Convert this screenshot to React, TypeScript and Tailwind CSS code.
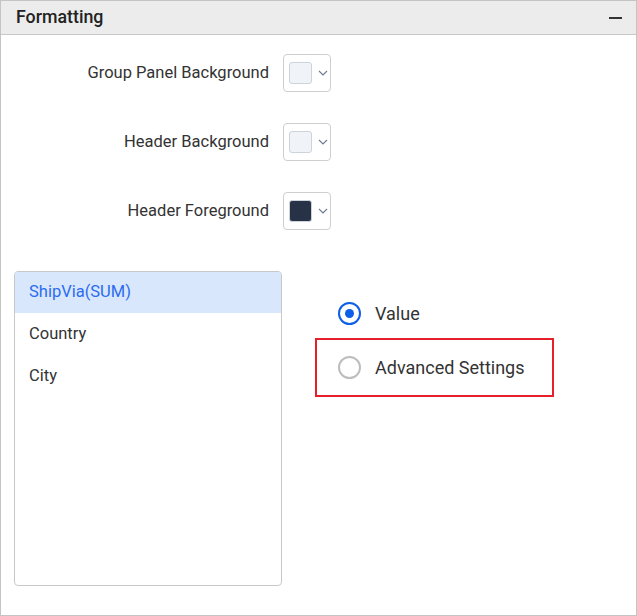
import React from "react";

function Chevron() {
  return (
    <svg width="10" height="6" viewBox="0 0 10 6" className="block">
      <path d="M1 1 L5 5 L9 1" fill="none" stroke="#6b7a90" strokeWidth="1.1" />
    </svg>
  );
}

function ColorRow({ label, color }: { label: string; color: string }) {
  return (
    <div className="flex items-center">
      <div className="w-[255px] text-right text-[16.5px] text-[#333]">{label}</div>
      <div className="ml-[14px] w-[48px] h-[38px] border border-[#cfcfcf] rounded-[4px] flex items-center pl-[5px] bg-white">
        <div
          className="w-[23px] h-[22px] rounded-[3px] border border-[#cdd3da]"
          style={{ background: color }}
        />
        <div className="ml-[6px]">
          <Chevron />
        </div>
      </div>
    </div>
  );
}

export default function App() {
  return (
    <div
      className="w-[637px] h-[616px] border border-[#c4c4c4] bg-white flex flex-col"
      style={{ fontFamily: "Roboto, 'Liberation Sans', sans-serif" }}
    >
      <div className="h-[34px] shrink-0 bg-[#ececec] border-b border-[#c8c8c8] flex items-center justify-between pl-[15px] pr-[14px]">
        <span className="text-[17.8px] font-medium text-[#222]">Formatting</span>
        <div className="w-[13px] h-[2px] bg-[#333]" />
      </div>
      <div className="flex flex-col pt-[19px] pl-[13px]">
        <div className="flex flex-col gap-[31px]">
          <ColorRow label="Group Panel Background" color="#f0f4f8" />
          <ColorRow label="Header Background" color="#f0f4f8" />
          <ColorRow label="Header Foreground" color="#283247" />
        </div>
        <div className="flex mt-[41px]">
          <div className="w-[268px] h-[315px] border border-[#c8c8c8] rounded-[4px] overflow-hidden text-[16.5px]">
            <div className="h-[41px] bg-[#d9e7fc] text-[#2b6cf0] flex items-center pl-[14px]">ShipVia(SUM)</div>
            <div className="h-[42px] text-[#333] flex items-center pl-[14px]">Country</div>
            <div className="h-[42px] text-[#333] flex items-center pl-[14px]">City</div>
          </div>
          <div className="ml-[33px] pt-[30px] flex flex-col">
            <div className="flex items-center pl-[23px] h-[24px]">
              <div className="w-[23px] h-[23px] rounded-full border-2 border-[#0b5fe8] flex items-center justify-center">
                <div className="w-[9px] h-[9px] rounded-full bg-[#0b5fe8]" />
              </div>
              <span className="ml-[14px] text-[18px] text-[#333]">Value</span>
            </div>
            <div className="mt-[13px] w-[239px] h-[59px] border-2 border-[#e5202b] flex items-center pl-[21px]">
              <div className="w-[23px] h-[23px] rounded-full border-2 border-[#bdbdbd]" />
              <span className="ml-[14px] text-[18px] text-[#333]">Advanced Settings</span>
            </div>
          </div>
        </div>
      </div>
    </div>
  );
}
